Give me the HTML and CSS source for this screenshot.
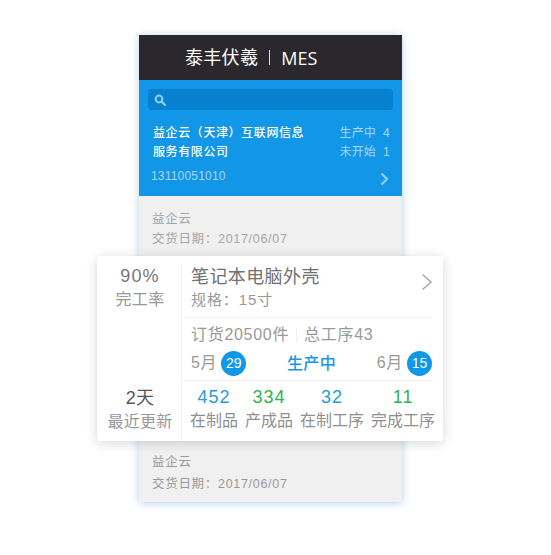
FILE: index.html
```html
<!DOCTYPE html>
<html lang="zh-CN">
<head>
    <meta charset="UTF-8">
    <meta name="viewport" content="width=device-width, initial-scale=1.0">
    <title>泰丰伏羲 MES</title>
    <link rel="stylesheet" href="styles.css">
</head>
<body>
    <div class="phone">
        <div class="topbar">
            <span class="brand">泰丰伏羲</span>
            <span class="brand-sep"></span>
            <span class="brand-mes">MES</span>
        </div>
        <div class="company">
            <div class="search">
                <svg class="search-icon" width="12" height="12" viewBox="0 0 12 12">
                    <circle cx="5" cy="5" r="3.4" fill="none" stroke="#8fd0f5" stroke-width="2"/>
                    <path d="M7.6 7.6L11 11" stroke="#8fd0f5" stroke-width="2.2" stroke-linecap="round"/>
                </svg>
            </div>
            <div class="company-row">
                <div class="company-name">益企云（天津）互联网信息<br>服务有限公司</div>
                <div class="company-stats">
                    <div>生产中&nbsp;&nbsp;4</div>
                    <div>未开始&nbsp;&nbsp;1</div>
                </div>
            </div>
            <div class="company-foot">
                <span class="company-tel">13110051010</span>
                <svg width="9" height="14" viewBox="0 0 9 14">
                    <path d="M1.5 1.5L7 7L1.5 12.5" fill="none" stroke="#8fd0f5" stroke-width="2.2"/>
                </svg>
            </div>
        </div>
        <div class="list">
            <div class="list-item">
                <div class="list-name">益企云</div>
                <div class="list-date">交货日期：2017/06/07</div>
            </div>
            <div class="list-item list-item-last">
                <div class="list-name">益企云</div>
                <div class="list-date">交货日期：2017/06/07</div>
            </div>
        </div>
    </div>

    <!-- floating detail card -->
    <div class="card">
        <div class="card-side">
            <div class="side-block">
                <div class="side-num">90%</div>
                <div class="side-label">完工率</div>
            </div>
            <div class="side-block">
                <div class="side-num side-num-dark">2天</div>
                <div class="side-label">最近更新</div>
            </div>
        </div>
        <div class="card-main">
            <div class="product">
                <div>
                    <div class="product-name">笔记本电脑外壳</div>
                    <div class="product-spec">规格：15寸</div>
                </div>
                <svg class="product-arrow" width="12" height="18" viewBox="0 0 12 18">
                    <path d="M1.5 1.5L10 9L1.5 16.5" fill="none" stroke="#a9a9a9" stroke-width="1.6"/>
                </svg>
            </div>
            <div class="order">
                <div class="order-line">
                    <span>订货20500件</span>
                    <span class="order-sep"></span>
                    <span>总工序43</span>
                </div>
                <div class="order-dates">
                    <div class="date"><span class="month">5月</span><span class="day">29</span></div>
                    <div class="order-status">生产中</div>
                    <div class="date"><span class="month">6月</span><span class="day">15</span></div>
                </div>
            </div>
            <div class="counts">
                <div class="count"><div class="count-num blue">452</div><div class="count-label">在制品</div></div>
                <div class="count"><div class="count-num green">334</div><div class="count-label">产成品</div></div>
                <div class="count"><div class="count-num blue">32</div><div class="count-label">在制工序</div></div>
                <div class="count"><div class="count-num green">11</div><div class="count-label">完成工序</div></div>
            </div>
        </div>
    </div>
</body>
</html>
```

FILE: styles.css
```css
html, body {
    margin: 0;
    padding: 0;
}
body {
    position: relative;
    width: 551px;
    height: 555px;
    overflow: hidden;
    background: #fff;
    font-family: "Liberation Sans", "Noto Sans CJK SC", sans-serif;
    color: #8c8c8c;
}
.phone {
    width: 263px;
    height: 467px;
    margin: 35px 0 0 139px;
    display: flex;
    flex-direction: column;
    box-shadow: 0 1px 8px rgba(90, 150, 215, 0.45);
}
.topbar {
    height: 45px;
    flex: none;
    background: #2a282c;
    color: #fff;
    display: flex;
    align-items: center;
    padding-left: 46px;
    box-sizing: border-box;
}
.brand {
    font-size: 18px;
    line-height: 1;
    letter-spacing: 0.3px;
}
.brand-sep {
    width: 1px;
    height: 15px;
    background: #ddd;
    margin: 0 11px 0 11px;
}
.brand-mes {
    font-family: "Open Sans", sans-serif;
    font-size: 18px;
    font-weight: 500;
    line-height: 1;
}
.company {
    height: 116px;
    flex: none;
    box-sizing: border-box;
    background: #1196e8;
    padding: 9px 9px 0 12px;
}
.search {
    height: 21px;
    margin-left: -3px;
    border-radius: 4px;
    background: #0680cf;
    display: flex;
    align-items: center;
    padding-left: 6px;
}
.company-row {
    display: flex;
    justify-content: space-between;
    margin-top: 14px;
}
.company-name {
    color: #fff;
    font-size: 12px;
    font-weight: 500;
    letter-spacing: 0.6px;
    line-height: 19px;
    margin-left: 2px;
}
.company-stats {
    color: #a6d9f7;
    font-size: 12px;
    letter-spacing: 0.2px;
    line-height: 19px;
    text-align: right;
    margin-right: 3px;
}
.company-foot {
    display: flex;
    justify-content: space-between;
    align-items: center;
    margin-top: 3px;
    padding-right: 4px;
}
.company-tel {
    color: #a6d9f7;
    font-size: 12px;
    letter-spacing: 0.2px;
    line-height: 18px;
}
.company-foot svg {
    margin-top: 7px;
}
.list {
    flex: 1;
    background: #f0f0f0;
    display: flex;
    flex-direction: column;
    justify-content: space-between;
    padding: 13px 13px 8px;
    color: #a5a5a5;
}
.list-name, .list-date {
    font-size: 12.5px;
    letter-spacing: 0.7px;
    line-height: 20px;
}
.list-item-last .list-name {
    color: #999;
}
.list-item-last .list-date {
    margin-top: 2px;
    color: #999;
}
.card {
    position: absolute;
    left: 97px;
    top: 256px;
    width: 346px;
    height: 185px;
    box-sizing: border-box;
    background: #fff;
    border-radius: 3px;
    box-shadow: 0 2px 12px rgba(0, 0, 0, 0.16);
    display: flex;
}
.card-side {
    width: 84px;
    flex: none;
    display: flex;
    flex-direction: column;
    justify-content: space-between;
    align-items: center;
    padding: 8px 0 7px 2px;
    box-sizing: border-box;
    text-align: center;
}
.side-num {
    font-size: 18px;
    letter-spacing: 1.2px;
    line-height: 24px;
    color: #777;
}
.side-num-dark {
    color: #555;
    letter-spacing: 0.3px;
}
.side-label {
    font-size: 16px;
    letter-spacing: 0.3px;
    line-height: 24px;
    color: #999;
}
.card-main {
    flex: 1;
    border-left: 1px solid #f2f2f2;
    margin: 8px 0 0;
    padding: 0 10px 0 0;
    min-width: 0;
    display: flex;
    flex-direction: column;
}
.product {
    height: 54px;
    flex: none;
    margin-left: 2px;
    padding: 2px 0 0 7px;
    border-bottom: 1px solid #f2f2f2;
    display: flex;
    justify-content: space-between;
    box-sizing: border-box;
}
.product-name {
    font-size: 18px;
    letter-spacing: 0.4px;
    line-height: 22px;
    color: #707070;
}
.product-spec {
    font-size: 15px;
    line-height: 23px;
    color: #999;
    letter-spacing: 0.9px;
}
.product-arrow {
    margin: 7px 0 0 0;
}
.order {
    height: 63px;
    flex: none;
    padding: 5px 0 0 9px;
    border-bottom: 1px solid #f2f2f2;
    box-sizing: border-box;
    font-size: 16px;
    letter-spacing: 0.7px;
    color: #999;
}
.order-line {
    display: flex;
    align-items: center;
    line-height: 24px;
}
.order-sep {
    width: 1px;
    height: 14px;
    background: #f0f0f0;
    margin: 0 7px 0 7px;
}
.order-dates {
    display: flex;
    justify-content: space-between;
    align-items: center;
    margin-top: 2px;
    padding-right: 1px;
}
.date {
    display: flex;
    align-items: center;
    gap: 4px;
}
.month {
    padding-bottom: 5px;
}
.day {
    width: 25px;
    height: 25px;
    border-radius: 50%;
    background: #0f98e8;
    color: #fff;
    text-align: center;
    line-height: 25px;
    letter-spacing: 0;
    font-size: 14px;
}
.order-status {
    color: #1a96e6;
    font-size: 16px;
    font-weight: 500;
    letter-spacing: 0.4px;
    margin-left: 0;
    padding-bottom: 4px;
}
.counts {
    flex: 1;
    display: flex;
    gap: 7px;
    padding: 4px 0 0 8px;
}
.count {
    text-align: center;
    white-space: nowrap;
}
.count-num {
    font-size: 18px;
    letter-spacing: 1px;
    line-height: 24px;
}
.blue { color: #2b9bd2; }
.green { color: #2fb257; }
.count-label {
    font-size: 16px;
    line-height: 24px;
    color: #8f8f8f;
}
```
